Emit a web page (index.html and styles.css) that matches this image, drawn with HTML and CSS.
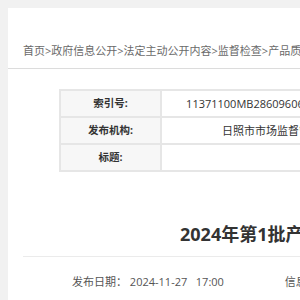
FILE: index.html
```html
<!DOCTYPE html>
<html>
<head>
  <title>2024年第1批产品质量监督抽查结果公告</title>
  <meta charset="utf-8">
  <link rel="stylesheet" href="styles.css">
</head>
<body>
  <div class="page">
    <div class="crumb">首页&gt;政府信息公开&gt;法定主动公开内容&gt;监督检查&gt;产品质量监督抽查</div>
    <div class="content">
      <table class="meta">
        <tr>
          <td class="label">索引号:</td>
          <td class="value">11371100MB28609606/2024-00276</td>
        </tr>
        <tr>
          <td class="label">发布机构:</td>
          <td class="value">日照市市场监督管理局</td>
        </tr>
        <tr>
          <td class="label">标题:</td>
          <td class="value"></td>
        </tr>
      </table>
      <h1 class="title">2024年第1批产品质量监督抽查结果公告</h1>
      <div class="info">
        <span class="date">发布日期： 2024-11-27&nbsp;&nbsp;&nbsp;17:00</span>
        <span>信息来源：日照市市场监督管理局</span>
      </div>
    </div>
  </div>
</body>
</html>
```

FILE: styles.css
```css
html, body {
  overflow: hidden;
}
body {
  margin: 0;
  padding: 8px 0 0 8px;
  background-color: #f1f1f1;
  font-family: "Open Sans", "Noto Sans CJK SC", sans-serif;
  font-size: 11px;
  color: #333;
}
.page {
  width: 1200px;
  height: 292px;
  background-color: white;
}
.crumb {
  padding: 35px 15px 9px;
  line-height: 16px;
  color: #6a6a6a;
  border-bottom: 1px solid #dcdcdc;
}
.content {
  padding: 0 15px;
}
.meta {
  margin: 20px 0 0 36px;
  border-collapse: separate;
  border-spacing: 0;
  border: 1px solid #e6e6e6;
}
.meta td {
  border: 1px solid #e6e6e6;
  height: 25px;
  line-height: 25px;
  padding: 0;
  text-align: center;
}
.meta .label {
  width: 99px;
  background-color: #f7f7f7;
  font-weight: bold;
  font-size: 10.5px;
}
.meta .value {
  width: 230px;
}
.title {
  margin: 47px 0 0;
  padding: 0 0 7px 157px;
  font-size: 18px;
  line-height: 30px;
  color: #333;
  border-bottom: 1px solid #ebebeb;
}
.info {
  margin-top: 15px;
  padding-left: 49px;
  line-height: 20px;
  color: #555;
}
.date {
  display: inline-block;
  width: 210px;
}
```
